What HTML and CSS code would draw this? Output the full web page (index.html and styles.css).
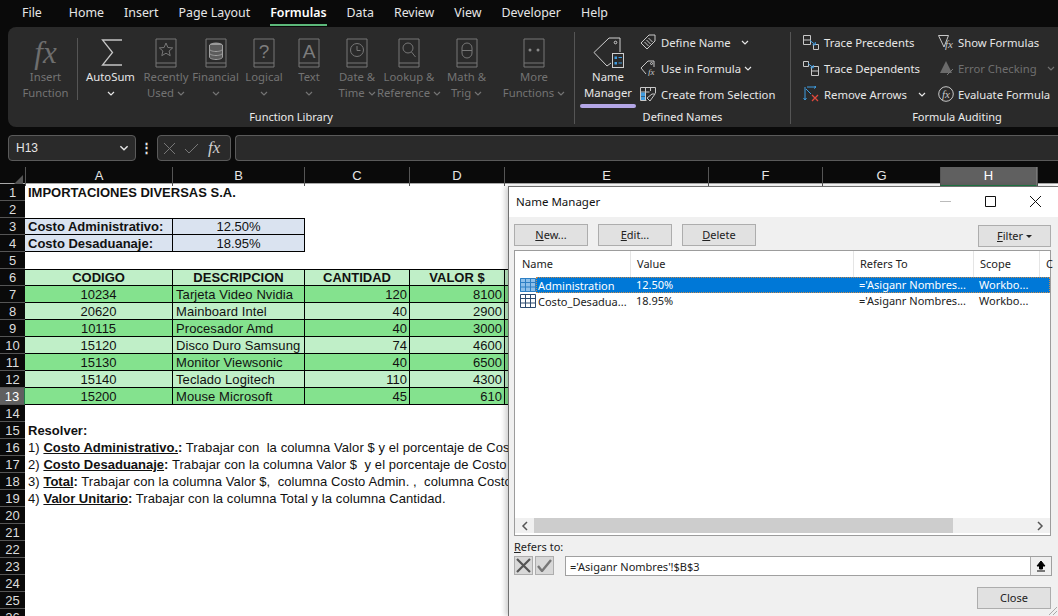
FILE: index.html
```html
<!DOCTYPE html>
<html lang="en">
<head>
    <meta charset="UTF-8">
    <title>Name Manager</title>
    <link rel="stylesheet" href="styles.css">
</head>
<body>
    <svg class="defs" width="0" height="0">
        <symbol id="book" viewBox="0 0 22 30">
            <path d="M1 1h20v28H1zM1 25h20" fill="none" stroke="#777"/>
        </symbol>
        <symbol id="chev" viewBox="0 0 8 5">
            <path d="M1 1l3 3 3-3" fill="none" stroke="currentColor" stroke-width="1.2"/>
        </symbol>
        <symbol id="grid" viewBox="0 0 16 14">
            <path d="M.5.5h15v13H.5zM.5 4.5h15M.5 9h15M5.500.5v13M10.500.5v13" fill="none" stroke="currentColor"/>
        </symbol>
    </svg>

    <nav class="tabs">
        <a>File</a><a>Home</a><a>Insert</a><a>Page Layout</a><a class="active">Formulas</a><a>Data</a><a>Review</a><a>View</a><a>Developer</a><a>Help</a>
    </nav>

    <section class="ribbon">
        <div class="group group-lib">
            <div class="group-body">
                <div class="big off col-insert">
                    <div class="big-icon"><span class="fx-big">fx</span></div>
                    <span>Insert</span><span>Function</span>
                </div>
                <div class="vsep"></div>
                <div class="big on col-sum">
                    <div class="big-icon">
                        <svg class="sigma" width="22" height="27" viewBox="0 0 22 27"><path d="M21 1H1.500L11.500 13.500 1.500 26H21" fill="none" stroke="#c4c4c4" stroke-width="1.300"/></svg>
                    </div>
                    <span>AutoSum</span>
                    <span><svg class="chev"><use href="#chev"/></svg></span>
                </div>
                <div class="big off col-recent">
                    <div class="big-icon">
                        <svg class="book" viewBox="0 0 22 30"><use href="#book" width="22" height="30"/><path d="M11 5l1.900 4.500 4.800.4-3.600 3.100 1.100 4.700L11 15.200 6.800 17.700l1.100-4.700-3.600-3.100 4.800-.4z" fill="none" stroke="#777"/></svg>
                    </div>
                    <span>Recently</span><span>Used <svg class="chev"><use href="#chev"/></svg></span>
                </div>
                <div class="big off col-fin">
                    <div class="big-icon">
                        <svg class="book" viewBox="0 0 22 30"><use href="#book" width="22" height="30"/><ellipse cx="11" cy="7" rx="6.500" ry="2.500" fill="#9a9a9a"/><path d="M4.500 7v12c0 1.400 3 2.500 6.500 2.500s6.500-1.100 6.500-2.500V7M4.500 11c0 1.400 3 2.500 6.500 2.500s6.500-1.100 6.500-2.500M4.500 15c0 1.400 3 2.500 6.500 2.500s6.500-1.100 6.500-2.500" fill="#5c5c5c" stroke="#a0a0a0"/></svg>
                    </div>
                    <span>Financial</span><span><svg class="chev"><use href="#chev"/></svg></span>
                </div>
                <div class="big off col-logic">
                    <div class="big-icon">
                        <svg class="book" viewBox="0 0 22 30"><use href="#book" width="22" height="30"/><text x="11" y="20" class="book-text">?</text></svg>
                    </div>
                    <span>Logical</span><span><svg class="chev"><use href="#chev"/></svg></span>
                </div>
                <div class="big off col-text">
                    <div class="big-icon">
                        <svg class="book" viewBox="0 0 22 30"><use href="#book" width="22" height="30"/><text x="11" y="20" class="book-text">A</text></svg>
                    </div>
                    <span>Text</span><span><svg class="chev"><use href="#chev"/></svg></span>
                </div>
                <div class="big off col-date">
                    <div class="big-icon">
                        <svg class="book" viewBox="0 0 22 30"><use href="#book" width="22" height="30"/><circle cx="11" cy="12" r="6.500" fill="none" stroke="#777"/><path d="M11 8v4.500h3.500" fill="none" stroke="#777"/></svg>
                    </div>
                    <span>Date &amp;</span><span>Time <svg class="chev"><use href="#chev"/></svg></span>
                </div>
                <div class="big off col-look">
                    <div class="big-icon">
                        <svg class="book" viewBox="0 0 22 30"><use href="#book" width="22" height="30"/><circle cx="10" cy="10" r="5" fill="none" stroke="#777"/><path d="M13.500 14l4 5" fill="none" stroke="#777"/></svg>
                    </div>
                    <span>Lookup &amp;</span><span>Reference <svg class="chev"><use href="#chev"/></svg></span>
                </div>
                <div class="big off col-math">
                    <div class="big-icon">
                        <svg class="book" viewBox="0 0 22 30"><use href="#book" width="22" height="30"/><rect x="6" y="5" width="10" height="15" rx="5" fill="none" stroke="#777"/><path d="M6 12.500h10" stroke="#777"/></svg>
                    </div>
                    <span>Math &amp;</span><span>Trig <svg class="chev"><use href="#chev"/></svg></span>
                </div>
                <div class="big off col-more">
                    <div class="big-icon">
                        <svg class="book" viewBox="0 0 22 30"><use href="#book" width="22" height="30"/><circle cx="7" cy="12" r="1.500" fill="#888"/><circle cx="15" cy="12" r="1.500" fill="#888"/></svg>
                    </div>
                    <span>More</span><span>Functions <svg class="chev"><use href="#chev"/></svg></span>
                </div>
            </div>
            <div class="group-label">Function Library</div>
        </div>

        <div class="group group-names">
            <div class="group-body">
                <div class="big on col-name">
                    <div class="big-icon">
                        <svg width="31" height="31" viewBox="0 0 31 31"><path d="M27 15V1H16L1 15.500 14 29l4-3" fill="none" stroke="#cfcfcf"/><circle cx="22.500" cy="5.500" r="1.300" fill="none" stroke="#cfcfcf"/><rect x="19.500" y="16.500" width="11" height="14" fill="#2a2a2a" stroke="#cfcfcf"/><path d="M21.500 19.500h2.500v2.500h-2.500zM21.500 25h2.500v2.500h-2.500z" fill="#3f9ce0"/><path d="M25.500 20.500h3.500M25.500 26h3.500" stroke="#3f9ce0"/></svg>
                    </div>
                    <span>Name</span><span>Manager</span>
                    <div class="mark"></div>
                </div>
                <div class="small-col">
                    <div class="small">
                        <svg class="ico" viewBox="0 0 16 16"><path d="M15 1v6l-8 8-6-6 8-8zM4.500 8l4 4M6.500 6l4 4M8.500 4l4 4" fill="none" stroke="#c8c8c8"/></svg>
                        <span>Define Name</span><svg class="chev chev-define"><use href="#chev"/></svg>
                    </div>
                    <div class="small">
                        <svg class="ico" viewBox="0 0 16 16"><path d="M14 7V1H8L1 8l5 6" fill="none" stroke="#c8c8c8"/><circle cx="11.500" cy="3.500" r="1" fill="none" stroke="#c8c8c8"/><text x="8" y="15" class="mini-fx">fx</text></svg>
                        <span>Use in Formula</span><svg class="chev chev-use"><use href="#chev"/></svg>
                    </div>
                    <div class="small">
                        <svg class="ico" viewBox="0 0 16 16"><path d="M.5 1.500h15v6M.5 1.500v13h6M.5 6h9M5.500 1.500V14.500M10.500 1.500V5" fill="none" stroke="#c8c8c8"/><rect x="1" y="6.500" width="4" height="3.500" fill="#3f9ce0"/><rect x="1" y="10.500" width="4" height="3.500" fill="#3f9ce0"/><path d="M15 8l-5 7-3-3 5-4z" fill="#2a2a2a" stroke="#c8c8c8"/></svg>
                        <span>Create from Selection</span>
                    </div>
                </div>
            </div>
            <div class="group-label">Defined Names</div>
        </div>

        <div class="group group-audit">
            <div class="group-body">
                <div class="small-col col-trace">
                    <div class="small">
                        <svg class="ico" viewBox="0 0 16 16"><path d="M.5 1.500h7v9h-7zM.5 6h7M10.500 10.500h5v5h-5z" fill="none" stroke="#c8c8c8"/><path d="M7 6.500l5 4M9.500 10.800h2.800V8" fill="none" stroke="#3f9ce0"/></svg>
                        <span>Trace Precedents</span>
                    </div>
                    <div class="small">
                        <svg class="ico" viewBox="0 0 16 16"><path d="M.5 1.500h5v5h-5zM8.500 6.500h7v9h-7zM8.500 11h7" fill="none" stroke="#c8c8c8"/><path d="M5 3.500l5 4M7.500 7.800h2.800V5" fill="none" stroke="#3f9ce0"/></svg>
                        <span>Trace Dependents</span>
                    </div>
                    <div class="small">
                        <svg class="ico" viewBox="0 0 16 16"><path d="M2 1v13M2 14l-1.500-2M2 14l1.500-2M4 1h9M13 1l-2-1.500M13 1l-2 1.500M3 3l5 5" fill="none" stroke="#3f9ce0"/><path d="M9 9l6 6M15 9l-6 6" fill="none" stroke="#e0483c" stroke-width="1.300"/></svg>
                        <span>Remove Arrows</span><svg class="chev chev-remove"><use href="#chev"/></svg>
                    </div>
                </div>
                <div class="small-col col-show">
                    <div class="small">
                        <svg class="ico" viewBox="0 0 16 16"><path d="M.5 1.500h10L6 13 .5 1.500z" fill="none" stroke="#c8c8c8"/><text x="11" y="14" class="mini-fx big-fx">fx</text></svg>
                        <span>Show Formulas</span>
                    </div>
                    <div class="small off">
                        <svg class="ico" viewBox="0 0 16 16"><path d="M8 1l6 12H2z" fill="#6b6b6b"/><path d="M9 15l2-2 4-4" fill="none" stroke="#777"/></svg>
                        <span>Error Checking</span><svg class="chev chev-error"><use href="#chev"/></svg>
                    </div>
                    <div class="small">
                        <svg class="ico" viewBox="0 0 16 16"><circle cx="8" cy="8" r="7.300" fill="none" stroke="#c8c8c8"/><text x="8" y="11.500" class="mini-fx big-fx">fx</text></svg>
                        <span>Evaluate Formula</span>
                    </div>
                </div>
            </div>
            <div class="group-label">Formula Auditing</div>
        </div>
    </section>

    <section class="formula-bar">
        <div class="name-box">
            <span>H13</span>
            <svg class="chev chev-name"><use href="#chev"/></svg>
        </div>
        <div class="fb-dots">&#8942;</div>
        <div class="fb-btns">
            <svg width="11" height="11" viewBox="0 0 11 11"><path d="M0 0l11 11M11 0L0 11" stroke="#777" fill="none"/></svg>
            <svg width="15" height="11" viewBox="0 0 15 11"><path d="M1 6l4 4L14 1" stroke="#777" fill="none"/></svg>
            <span class="fx-small">fx</span>
        </div>
        <div class="fb-input"></div>
    </section>

    <section class="col-heads">
        <div class="corner"><span></span></div>
        <div>A</div><div>B</div><div>C</div><div>D</div><div>E</div><div>F</div><div>G</div><div class="selected">H</div><div></div>
    </section>

    <section class="sheet">
        <div class="row"><div class="rh">1</div><div class="bold text">IMPORTACIONES DIVERSAS S.A.</div></div>
        <div class="row"><div class="rh">2</div></div>
        <div class="row"><div class="rh">3</div><div class="c top bg-blue bold text">Costo Administrativo:</div><div class="c top bg-blue mid">12.50%</div></div>
        <div class="row"><div class="rh">4</div><div class="c bg-blue bold text">Costo Desaduanaje:</div><div class="c bg-blue mid">18.95%</div></div>
        <div class="row"><div class="rh">5</div></div>
        <div class="row"><div class="rh">6</div><div class="c top lite bold mid">CODIGO</div><div class="c top lite bold mid">DESCRIPCION</div><div class="c top lite bold mid">CANTIDAD</div><div class="c top lite bold mid">VALOR $</div><div class="c top lite"></div></div>
        <div class="row"><div class="rh">7</div><div class="c dark mid">10234</div><div class="c dark text">Tarjeta Video Nvidia</div><div class="c dark num">120</div><div class="c dark num">8100</div><div class="c dark"></div></div>
        <div class="row"><div class="rh">8</div><div class="c lite mid">20620</div><div class="c lite text">Mainboard Intel</div><div class="c lite num">40</div><div class="c lite num">2900</div><div class="c lite"></div></div>
        <div class="row"><div class="rh">9</div><div class="c dark mid">10115</div><div class="c dark text">Procesador Amd</div><div class="c dark num">40</div><div class="c dark num">3000</div><div class="c dark"></div></div>
        <div class="row"><div class="rh">10</div><div class="c lite mid">15120</div><div class="c lite text">Disco Duro Samsung</div><div class="c lite num">74</div><div class="c lite num">4600</div><div class="c lite"></div></div>
        <div class="row"><div class="rh">11</div><div class="c dark mid">15130</div><div class="c dark text">Monitor Viewsonic</div><div class="c dark num">40</div><div class="c dark num">6500</div><div class="c dark"></div></div>
        <div class="row"><div class="rh">12</div><div class="c lite mid">15140</div><div class="c lite text">Teclado Logitech</div><div class="c lite num">110</div><div class="c lite num">4300</div><div class="c lite"></div></div>
        <div class="row"><div class="rh rh-sel">13</div><div class="c dark mid">15200</div><div class="c dark text">Mouse Microsoft</div><div class="c dark num">45</div><div class="c dark num">610</div><div class="c dark"></div></div>
        <div class="row"><div class="rh">14</div></div>
        <div class="row"><div class="rh">15</div><div class="bold text">Resolver:</div></div>
        <div class="row"><div class="rh">16</div><div class="text">1) <b><u>Costo Administrativo.</u>:</b> Trabajar con  la columna Valor $ y el porcentaje de Costo Administrativo.</div></div>
        <div class="row"><div class="rh">17</div><div class="text">2) <b><u>Costo Desaduanaje</u>:</b> Trabajar con la columna Valor $  y el porcentaje de Costo Desaduanaje.</div></div>
        <div class="row"><div class="rh">18</div><div class="text">3) <b><u>Total</u>:</b> Trabajar con la columna Valor $,  columna Costo Admin. ,  columna Costo Desaduanaje.</div></div>
        <div class="row"><div class="rh">19</div><div class="text">4) <b><u>Valor Unitario</u>:</b> Trabajar con la columna Total y la columna Cantidad.</div></div>
        <div class="row"><div class="rh">20</div></div>
        <div class="row"><div class="rh">21</div></div>
        <div class="row"><div class="rh">22</div></div>
        <div class="row"><div class="rh">23</div></div>
        <div class="row"><div class="rh">24</div></div>
        <div class="row"><div class="rh">25</div></div>
        <div class="row"><div class="rh">26</div></div>
    </section>

    <div class="dialog">
        <header class="dlg-title">
            <span>Name Manager</span>
            <div class="win-btns">
                <svg width="11" height="11" viewBox="0 0 11 11"><path d="M0 5.500h11" stroke="#bbb"/></svg>
                <svg width="11" height="11" viewBox="0 0 11 11"><path d="M.5.500h10v10H.5z" fill="none" stroke="#111"/></svg>
                <svg width="11" height="11" viewBox="0 0 11 11"><path d="M0 0l11 11M11 0L0 11" fill="none" stroke="#111"/></svg>
            </div>
        </header>
        <div class="dlg-body">
            <div class="dlg-actions">
                <button class="btn"><u>N</u>ew...</button>
                <button class="btn"><u>E</u>dit...</button>
                <button class="btn"><u>D</u>elete</button>
                <button class="btn btn-filter"><u>F</u>ilter <i class="caret"></i></button>
            </div>
            <div class="list">
                <div class="list-head">
                    <div>Name</div><div>Value</div><div>Refers To</div><div>Scope</div><div>C</div>
                </div>
                <div class="list-row picked">
                    <div class="name-cell"><svg class="grid-ico"><use href="#grid"/></svg><span class="name-text">Administration</span></div>
                    <div>12.50%</div><div>='Asiganr Nombres...</div><div>Workbo...</div>
                </div>
                <div class="list-row">
                    <div class="name-cell"><svg class="grid-ico"><use href="#grid"/></svg><span class="name-text">Costo_Desadua...</span></div>
                    <div>18.95%</div><div>='Asiganr Nombres...</div><div>Workbo...</div>
                </div>
                <div class="list-space"></div>
                <div class="hscroll">
                    <svg width="7" height="10" viewBox="0 0 7 10"><path d="M6 1L2 5l4 4" fill="none" stroke="#555" stroke-width="1.500"/></svg>
                    <div class="thumb"></div>
                    <svg width="7" height="10" viewBox="0 0 7 10"><path d="M1 1l4 4-4 4" fill="none" stroke="#555" stroke-width="1.500"/></svg>
                </div>
            </div>
            <div class="refers-label"><u>R</u>efers to:</div>
            <div class="refers">
                <button class="square">
                    <svg width="15" height="15" viewBox="0 0 15 15"><path d="M1 1l13 13M14 1L1 14" fill="none" stroke="#555" stroke-width="2.200"/></svg>
                </button>
                <button class="square">
                    <svg width="15" height="13" viewBox="0 0 15 13"><path d="M1 7l4 5 9-11" fill="none" stroke="#777" stroke-width="2.400"/></svg>
                </button>
                <div class="refers-input">
                    <span>='Asiganr Nombres'!$B$3</span>
                    <div class="up">
                        <svg width="10" height="12" viewBox="0 0 10 12"><path d="M5 1L1 6h2.500v3h3V6H9zM1 11h8" fill="#000" stroke="#000"/></svg>
                    </div>
                </div>
            </div>
            <div class="dlg-foot"><button class="btn">Close</button></div>
        </div>
        <svg class="grip" width="10" height="10" viewBox="0 0 10 10"><path d="M9 1L1 9M9 5L5 9" stroke="#aaa" fill="none"/></svg>
    </div>
</body>
</html>
```

FILE: styles.css
```css
* {
    box-sizing: border-box;
}
html, body {
    height: 616px;
    overflow: hidden;
}
body {
    margin: 0;
    background-color: #0a0a0a;
    font-family: "Noto Sans", sans-serif;
    font-size: 11.300px;
    color: #e6e6e6;
    position: relative;
}
.defs {
    position: absolute;
}
.chev {
    width: 8px;
    height: 5px;
    vertical-align: middle;
}

/* tabs */
.tabs {
    display: flex;
    height: 27px;
    padding-left: 12px;
    line-height: 25px;
    font-size: 12.400px;
}
.tabs a {
    padding: 0 10px;
    position: relative;
    white-space: nowrap;
}
.tabs a:first-child {
    margin-right: 7px;
}
.tabs a.active {
    font-weight: 600;
    color: #fff;
}
.tabs a.active::after {
    content: "";
    position: absolute;
    left: 10px;
    right: 10px;
    bottom: 1px;
    height: 2px;
    background-color: #5cb87a;
}

/* ribbon */
.ribbon {
    display: flex;
    height: 100px;
    margin-left: 8px;
    padding-top: 5px;
    background-color: #2a2a2a;
    border-radius: 8px 0 0 8px;
    width: 1050px;
    overflow: hidden;
}
.group {
    flex: none;
    display: flex;
    flex-direction: column;
    height: 92px;
}
.group-lib {
    width: 567px;
    border-right: 1px solid #555;
}
.group-names {
    width: 216px;
    border-right: 1px solid #555;
}
.group-audit {
    width: 332px;
}
.group-body {
    display: flex;
    height: 78px;
}
.group-label {
    text-align: center;
    line-height: 14px;
    font-size: 11px;
    color: #ececec;
}
.group-lib .group-body {
    padding-left: 6px;
}
.vsep {
    width: 1px;
    height: 62px;
    margin-top: 6px;
    background-color: #555;
}
.big {
    flex: none;
    display: flex;
    flex-direction: column;
    align-items: center;
    line-height: 16px;
    white-space: nowrap;
}
.big.off {
    color: #737373;
}
.big-icon {
    height: 37px;
    display: flex;
    align-items: center;
    justify-content: center;
    padding-top: 4px;
}
.sigma {
    margin-left: 2px;
}
.book {
    width: 22px;
    height: 30px;
}
.book-text {
    font-family: "Liberation Sans", sans-serif;
    font-size: 19px;
    fill: #7d7d7d;
    text-anchor: middle;
}
.fx-big {
    font-family: "Liberation Serif", serif;
    font-style: italic;
    font-size: 31px;
    color: #6e6e6e;
}
.col-insert { width: 63px; }
.col-sum { width: 63px; margin-left: 1px; }
.col-recent { width: 48px; }
.col-fin { width: 51px; }
.col-logic { width: 46px; }
.col-text { width: 44px; }
.col-date { width: 52px; }
.col-look { width: 52px; }
.col-math { width: 63px; }
.col-more { width: 72px; }
.col-name {
    width: 56px;
    margin-left: 5px;
}
.mark {
    width: 56px;
    height: 4px;
    margin-top: 3px;
    border-radius: 2px;
    background-color: #b3a6e6;
}
.small-col {
    display: flex;
    flex-direction: column;
    margin-top: -3px;
    margin-left: 4px;
}
.small {
    display: flex;
    align-items: center;
    height: 26px;
    gap: 5px;
    white-space: nowrap;
}
.small.off {
    color: #6f6f6f;
}
.ico {
    flex: none;
    width: 16px;
    height: 16px;
}
.mini-fx {
    font-family: "Liberation Serif", serif;
    font-style: italic;
    font-size: 9px;
    fill: #c8c8c8;
}
.big-fx {
    font-size: 11px;
    text-anchor: middle;
}
.col-trace {
    width: 135px;
    margin-left: 12px;
}
.col-show {
    margin-left: 0;
}
.col-show .small {
    gap: 4px;
}
.chev-define { margin-left: 5px; }
.chev-use { margin-left: -2px; }
.chev-remove { margin-left: 6px; }
.chev-error { margin-left: 6px; }

/* formula bar */
.formula-bar {
    display: flex;
    align-items: stretch;
    height: 26px;
    margin-top: 8px;
    padding-left: 8px;
}
.name-box {
    width: 128px;
    border: 1px solid #5a5a5a;
    border-radius: 4px;
    background-color: #2a2a2a;
    display: flex;
    align-items: center;
    justify-content: space-between;
    padding: 0 6px 0 7px;
    font-family: "Liberation Sans", sans-serif;
    font-size: 12px;
}
.chev-name {
    width: 10px;
    height: 6px;
}
.fb-dots {
    width: 21px;
    text-align: center;
    line-height: 25px;
    font-size: 13px;
    font-weight: bold;
}
.fb-btns {
    width: 74px;
    border: 1px solid #5a5a5a;
    border-radius: 4px;
    background-color: #2a2a2a;
    display: flex;
    align-items: center;
    gap: 9px;
    padding-left: 6px;
}
.fx-small {
    font-family: "Liberation Serif", serif;
    font-style: italic;
    font-size: 17px;
    color: #d0d0d0;
}
.fb-input {
    flex: 1;
    margin-left: 4px;
    border: 1px solid #5a5a5a;
    border-right: none;
    border-radius: 4px 0 0 4px;
    background-color: #2a2a2a;
}

/* sheet */
.col-heads {
    display: grid;
    grid-template-columns: 25px 147px 132px 105px 95px 204px 114px 118px 97px 21px;
    height: 17px;
    margin-top: 6px;
    border-bottom: 1px solid #aaa;
    font-family: "Liberation Sans", sans-serif;
    font-size: 13px;
    line-height: 18px;
    text-align: center;
}
.col-heads > div {
    border-left: 1px solid #555;
}
.col-heads > div:first-child {
    border-left: none;
}
.col-heads .selected {
    background-color: #606060;
    color: #fff;
    border-bottom: 1px solid #1f7a45;
    border-right: 1px solid #777;
}
.corner {
    position: relative;
}
.corner span {
    position: absolute;
    right: 2px;
    bottom: 2px;
    border-left: 9px solid transparent;
    border-bottom: 9px solid #555;
}
.sheet {
    height: 432px;
    overflow: hidden;
    background-color: #fff;
    font-family: "Liberation Sans", sans-serif;
    font-size: 13px;
    color: #111;
}
.row {
    display: grid;
    grid-template-columns: 25px 148px 132px 105px 95px 1fr;
    grid-template-rows: 17px;
    height: 17px;
    line-height: 17px;
}
.rh {
    background-color: #0a0a0a;
    color: #ddd;
    text-align: center;
    border-bottom: 1px solid #555;
}
.rh-sel {
    background-color: #606060;
    color: #fff;
    border-right: 1px solid #1f7a45;
}
.c {
    border-right: 1px solid #000;
    border-bottom: 1px solid #000;
    overflow: hidden;
}
.c.top {
    box-shadow: inset 0 1px 0 #000;
}
.text {
    padding-left: 3px;
    white-space: pre;
    letter-spacing: 0.08px;
}
.text.bold, .text b {
    letter-spacing: 0;
}
.mid {
    text-align: center;
}
.num {
    text-align: right;
    padding-right: 2px;
}
.bold {
    font-weight: bold;
}
.bg-blue {
    background-color: #dae3f0;
}
.lite {
    background-color: #c0efc8;
}
.dark {
    background-color: #84e28e;
}

/* dialog */
.dialog {
    position: absolute;
    left: 508px;
    top: 186px;
    width: 550px;
    height: 430px;
    background-color: #f0f0f0;
    border-left: 1px solid #707070;
    border-top: 1px solid #707070;
    box-shadow: -3px 0 5px rgba(0, 0, 0, 0.18);
    color: #222;
    font-size: 11px;
}
.dlg-title {
    display: flex;
    align-items: center;
    justify-content: space-between;
    height: 30px;
    padding: 0 0 2px 7px;
    background-color: #fff;
    font-size: 11.500px;
    color: #111;
}
.win-btns {
    display: flex;
    gap: 34px;
    padding-right: 17px;
}
.dlg-body {
    padding: 0 7px 0 5px;
}
.dlg-actions {
    display: flex;
    gap: 10px;
    padding-top: 7px;
    height: 33px;
}
.btn {
    width: 74px;
    height: 22px;
    padding: 0 0 2px;
    border: 1px solid #adadad;
    background-color: #e1e1e1;
    font: inherit;
    color: #222;
}
.btn-filter {
    width: 73px;
    margin-left: auto;
    margin-top: 1px;
}
.caret {
    display: inline-block;
    vertical-align: middle;
    border: 3px solid transparent;
    border-top: 3px solid #222;
    border-bottom: none;
}
.list {
    height: 286px;
    display: flex;
    flex-direction: column;
    border: 1px solid #9c9c9c;
    background-color: #fff;
}
.list-head, .list-row {
    display: grid;
    grid-template-columns: 115px 223px 120px 66px 1fr;
    white-space: nowrap;
}
.list-head {
    height: 26px;
    line-height: 25px;
}
.list-head > div {
    padding-left: 6px;
    border-left: 1px solid #e5e5e5;
}
.list-head > div:first-child {
    padding-left: 7px;
    border-left: none;
}
.list-row {
    height: 16px;
    line-height: 15px;
}
.list-row > div {
    padding-left: 6px;
}
.list-row > .name-cell {
    display: flex;
    align-items: center;
    padding-left: 5px;
    gap: 2px;
    overflow: hidden;
}
.grid-ico {
    flex: none;
    width: 16px;
    height: 14px;
    color: #2c4a6e;
}
.picked {
    margin-left: 21px;
    grid-template-columns: 94px 223px 120px 66px 1fr;
    background-color: #0078d7;
    color: #fff;
    outline: 1px dotted #c98a4a;
    outline-offset: -1px;
}
.picked > .name-cell {
    margin-left: -21px;
    overflow: visible;
}
.picked .grid-ico {
    color: #2d7fc4;
    background-color: #8ec0ea;
}
.list-space {
    flex: 1;
}
.hscroll {
    display: flex;
    align-items: center;
    height: 15px;
    margin-bottom: 2px;
    padding: 0 6px;
    background-color: #f0f0f0;
}
.thumb {
    width: 419px;
    height: 15px;
    margin: 0 auto 0 6px;
    background-color: #cdcdcd;
}
.refers-label {
    margin-top: 4px;
    line-height: 14px;
}
.refers {
    display: flex;
    gap: 2px;
    margin-top: 2px;
    height: 20px;
}
.square {
    width: 19px;
    height: 19px;
    padding: 0;
    display: flex;
    align-items: center;
    justify-content: center;
    border: 1px solid #adadad;
    background-color: #d8d8d8;
}
.refers-input {
    flex: 1;
    margin-left: 9px;
    margin-right: -1px;
    display: flex;
    align-items: center;
    justify-content: space-between;
    padding-left: 4px;
    border: 1px solid #a0a0a0;
    background-color: #fff;
}
.up {
    width: 21px;
    height: 18px;
    display: flex;
    align-items: center;
    justify-content: center;
    border-left: 1px solid #adadad;
    background-color: #f0f0f0;
}
.dlg-foot {
    display: flex;
    justify-content: flex-end;
    margin-top: 11px;
}
.grip {
    position: absolute;
    right: 0;
    bottom: 0;
}
```
